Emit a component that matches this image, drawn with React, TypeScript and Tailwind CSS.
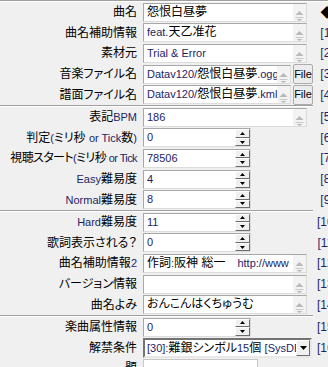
import React from "react";

const LATIN = "text-[#1d2466]";

// Latin runs get the narrower font and the blue-ish tint of ClearType text
function Txt({ s }: { s: string }) {
  const parts = s.split(/([\x21-\x7e](?:[\x20-\x7e]*[\x21-\x7e])?)/);
  return (
    <span>
      {parts.map((p, i) =>
        /[\x21-\x7e]/.test(p) ? (
          <span key={i} className={`${LATIN} text-[11px]`}>
            {p}
          </span>
        ) : (
          <span key={i}>{p}</span>
        )
      )}
    </span>
  );
}

function ScrollStrip() {
  return (
    <div className="w-[13px] h-full bg-[#f3f3f3] shrink-0">
      <svg width="13" height="17" viewBox="0 0 13 17">
        <polygon points="2.5,11 6.5,7 10.5,11" fill="#b9b9b9" />
        <rect x="2.5" y="13" width="8" height="1" fill="#c8c8c8" />
        <polygon points="3.5,15 9.5,15 6.5,17" fill="#b9b9b9" />
      </svg>
    </div>
  );
}

function TextBox({ value, width = 164 }: { value: string; width?: number }) {
  return (
    <div
      className="flex h-[19px] border border-[#a8a8a8] border-r-[#dcdcdc] border-b-[#dcdcdc] bg-white"
      style={{ width }}
    >
      <div className="flex-1 overflow-hidden whitespace-nowrap pl-[3px] leading-[17px]">
        <Txt s={value} />
      </div>
      <ScrollStrip />
    </div>
  );
}

function SpinButton({ up }: { up: boolean }) {
  return (
    <div className="flex-1 flex items-center justify-center bg-[#f0f0f0] border border-t-white border-l-white border-r-[#6d6d6d] border-b-[#6d6d6d]">
      <svg width="5" height="3" viewBox="0 0 5 3">
        {up ? (
          <polygon points="0,3 2.5,0 5,3" fill="#000" />
        ) : (
          <polygon points="0,0 5,0 2.5,3" fill="#000" />
        )}
      </svg>
    </div>
  );
}

function NumBox({ value }: { value: string }) {
  return (
    <div className="flex h-[19px] w-[108px] border border-[#a8a8a8] border-r-[#dcdcdc] border-b-[#dcdcdc] bg-white">
      <div className="flex-1 overflow-hidden whitespace-nowrap pl-[3px] leading-[17px]">
        <Txt s={value} />
      </div>
      <div className="w-[15px] flex flex-col">
        <SpinButton up />
        <SpinButton up={false} />
      </div>
    </div>
  );
}

function FileBox({ value }: { value: string }) {
  return (
    <div className="flex items-center gap-[2px]">
      <TextBox value={value} width={148} />
      <div className="h-[20px] w-[20px] flex items-center justify-center bg-[#ececec] border border-[#acacac] rounded-[2px] text-[11px] text-black">
        File
      </div>
    </div>
  );
}

function ComboBox({ value }: { value: string }) {
  return (
    <div className="flex h-[20px] w-[169px] border-2 border-t-[#737373] border-l-[#737373] border-r-[#e8e8e8] border-b-[#e8e8e8] bg-white">
      <div className="flex-1 overflow-hidden whitespace-nowrap pl-[2px] leading-[16px]">
        <Txt s={value} />
      </div>
      <div className="w-[14px] flex items-center justify-center bg-[#f0f0f0] border border-t-white border-l-white border-r-[#6d6d6d] border-b-[#6d6d6d]">
        <svg width="7" height="4" viewBox="0 0 7 4">
          <polygon points="0,0 7,0 3.5,4" fill="#000" />
        </svg>
      </div>
    </div>
  );
}

type Field =
  | { kind: "text"; value: string }
  | { kind: "file"; value: string }
  | { kind: "num"; value: string }
  | { kind: "combo"; value: string }
  | { kind: "plain" };

type Row = { label: string; field: Field; mark?: string; tight?: boolean };

const blocks: Row[][] = [
  [
    { label: "曲名", field: { kind: "text", value: "怨恨白昼夢" }, mark: "◆" },
    { label: "曲名補助情報", field: { kind: "text", value: "feat.天乙准花" }, mark: "[1]" },
    { label: "素材元", field: { kind: "text", value: "Trial & Error" }, mark: "[2]" },
    { label: "音楽ファイル名", field: { kind: "file", value: "Datav120/怨恨白昼夢.ogg" }, mark: "[3]" },
    { label: "譜面ファイル名", field: { kind: "file", value: "Datav120/怨恨白昼夢.kml" }, mark: "[4]" },
  ],
  [
    { label: "表記BPM", field: { kind: "text", value: "186" }, mark: "[5]" },
    { label: "判定(ミリ秒 or Tick数)", field: { kind: "num", value: "0" }, mark: "[6]" },
    { label: "視聴スタート(ミリ秒 or Tick", field: { kind: "num", value: "78506" }, mark: "[7]", tight: true },
    { label: "Easy難易度", field: { kind: "num", value: "4" }, mark: "[8]" },
    { label: "Normal難易度", field: { kind: "num", value: "8" }, mark: "[9]" },
  ],
  [
    { label: "Hard難易度", field: { kind: "num", value: "11" }, mark: "[10]" },
    { label: "歌詞表示される？", field: { kind: "num", value: "0" }, mark: "[11]" },
    { label: "曲名補助情報2", field: { kind: "text", value: "作詞:阪神 総一　http://www" }, mark: "[12]" },
    { label: "バージョン情報", field: { kind: "text", value: "" }, mark: "[13]" },
    { label: "曲名よみ", field: { kind: "text", value: "おんこんはくちゅうむ" }, mark: "[14]" },
  ],
  [
    { label: "楽曲属性情報", field: { kind: "num", value: "0" }, mark: "[15]" },
    { label: "解禁条件", field: { kind: "combo", value: "[30]:難銀シンボル15個 [SysDB:3]" }, mark: "[16]" },
    { label: "題", field: { kind: "plain" } },
  ],
];

function FieldView({ field }: { field: Field }) {
  switch (field.kind) {
    case "text":
      return <TextBox value={field.value} />;
    case "file":
      return <FileBox value={field.value} />;
    case "num":
      return <NumBox value={field.value} />;
    case "combo":
      return <ComboBox value={field.value} />;
    default:
      return <div className="h-[19px] w-[115px] mt-[1px] self-start border border-[#c8c8c8] bg-white" />;
  }
}

export default function App() {
  return (
    <div
      className="w-[328px] h-[367px] overflow-hidden bg-[#f0f0f0] text-[12px] text-black [font-feature-settings:'palt']"
      style={{ fontFamily: '"Liberation Sans", "Noto Sans CJK JP", sans-serif' }}
    >
      <div className="w-[341px]">
        {blocks.map((rows, bi) => (
          <div key={bi}>
            <div
              className={`h-[2px] border-t border-b border-t-[#a0a0a0] border-b-white ${
                bi === 0 ? "w-[341px]" : "w-[313px]"
              }`}
            />
            {rows.map((row) => (
              <div key={row.label} className="flex items-center h-[20.6px]">
                <div
                  className={`w-[137px] flex justify-end whitespace-nowrap leading-none ${
                    row.tight ? "tracking-[-0.6px]" : ""
                  }`}
                >
                  <Txt s={row.label} />
                </div>
                <div className="w-[176px] pl-[6px] flex items-center h-full">
                  <FieldView field={row.field} />
                </div>
                <div className="w-[28px] text-center whitespace-nowrap leading-none">
                  {row.mark === "◆" ? (
                    <span className="text-[13px]">◆</span>
                  ) : row.mark ? (
                    <span className={`${LATIN} text-[12px]`}>{row.mark}</span>
                  ) : null}
                </div>
              </div>
            ))}
          </div>
        ))}
      </div>
    </div>
  );
}
